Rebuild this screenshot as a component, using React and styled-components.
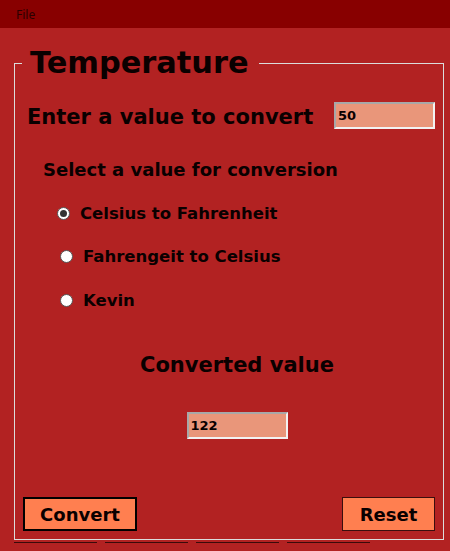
import React, { useState } from 'react'
import styled, { createGlobalStyle } from 'styled-components'

const cp = {
  background: '#b22222',
  menu: '#880000',
  field: '#e9967a',
  button: '#ff7f50',
  frame: '#dcdcdc',
  text: '#0a0000',
}

const GlobalStyle = createGlobalStyle`
  html, body {
    margin: 0;
    padding: 0;
    background-color: ${cp.background};
    font-family: "DejaVu Sans", Verdana, sans-serif;
    color: ${cp.text};
  }
`

/**
 * STYLING
 */
const Window = styled.div`
  width: 450px;
  height: 551px;
  overflow: hidden;
  display: flex;
  flex-direction: column;
`

const MenuBar = styled.div`
  height: 28px;
  background-color: ${cp.menu};
  display: flex;
  align-items: center;
  padding-left: 16px;
`

const MenuItem = styled.span`
  font-family: "Noto Sans", "DejaVu Sans", sans-serif;
  font-size: 12px;
  color: #2a0000;
`

const Group = styled.fieldset`
  margin: 17px 6px 0 14px;
  padding: 0 8px 8px 12px;
  height: 495px;
  box-sizing: border-box;
  border: 1px solid ${cp.frame};
  min-width: 0;
`

const Title = styled.legend`
  font-size: 30.4px;
  font-weight: bold;
  line-height: 36px;
  padding: 0 10px 0 8px;
  margin-left: -5px;
`

const Body = styled.div`
  height: 450px;
  display: flex;
  flex-direction: column;
`

const InputRow = styled.div`
  display: flex;
  align-items: center;
  justify-content: space-between;
  margin-top: 21px;
  height: 27px;
`

const Label = styled.div`
  font-size: ${p => p.size}px;
  font-weight: bold;
  white-space: nowrap;
  padding-top: ${p => p.nudge || 0}px;
`

const Field = styled.input`
  width: 101px;
  height: 27px;
  box-sizing: border-box;
  background-color: ${cp.field};
  border: 2px solid;
  border-color: #a8a8a8 #f2f2f2 #f2f2f2 #a8a8a8;
  font-family: "DejaVu Sans", sans-serif;
  font-weight: bold;
  font-size: 13px;
  padding: 0 2px;
  color: ${cp.text};
  outline: none;
`

const SubHeading = styled(Label)`
  margin: 30px 0 0 16px;
`

const Options = styled.div`
  display: flex;
  flex-direction: column;
  gap: 19.5px;
  margin-top: 21px;
`

const Option = styled.label`
  display: flex;
  align-items: center;
  gap: 10px;
  padding-left: ${p => p.indent}px;
  font-size: 16.5px;
  font-weight: bold;
  height: 24px;
  cursor: pointer;
`

const Dot = styled.span`
  width: 13px;
  height: 13px;
  border-radius: 50%;
  background: #fff;
  border: 1px solid #555;
  box-sizing: border-box;
  display: flex;
  align-items: center;
  justify-content: center;

  &::after {
    content: '';
    width: 7px;
    height: 7px;
    border-radius: 50%;
    background: ${p => (p.checked ? '#333' : 'transparent')};
  }
`

const Result = styled.div`
  display: flex;
  flex-direction: column;
  align-items: center;
  gap: 35px;
  margin-top: 41px;
  padding-left: 12px;
`

const Footer = styled.div`
  margin-top: auto;
  margin-left: -4px;
  display: flex;
  justify-content: space-between;
  align-items: center;
`

const Button = styled.button`
  height: 34px;
  width: ${p => p.w}px;
  background-color: ${cp.button};
  border: ${p => (p.primary ? '2px solid #000' : '1px solid #3a0e0e')};
  font-family: "DejaVu Sans", sans-serif;
  font-weight: bold;
  font-size: 18px;
  color: ${cp.text};
  padding: 0;
`

const Tabs = styled.div`
  display: flex;
  gap: 8px;
  margin: 2px 0 0 14px;
`

const Tab = styled.div`
  width: 83px;
  border-top: 1px solid #3a0a0a;
`

const OPTIONS = [
  { label: 'Celsius to Fahrenheit', indent: 30 },
  { label: 'Fahrengeit to Celsius', indent: 33 },
  { label: 'Kevin', indent: 33 },
]

/**
 * COMPONENT
 */
export default function App() {
  const [choice, setChoice] = useState(0)

  return (
    <Window>
      <GlobalStyle />
      <MenuBar>
        <MenuItem>File</MenuItem>
      </MenuBar>
      <Group>
        <Title>Temperature</Title>
        <Body>
          <InputRow>
            <Label size={21} nudge={2}>Enter a value to convert</Label>
            <Field defaultValue="50" />
          </InputRow>
          <SubHeading size={18}>Select a value for conversion</SubHeading>
          <Options>
            {OPTIONS.map((o, i) => (
              <Option key={o.label} indent={o.indent} onClick={() => setChoice(i)}>
                <Dot checked={choice === i} />
                {o.label}
              </Option>
            ))}
          </Options>
          <Result>
            <Label size={21}>Converted value</Label>
            <Field defaultValue="122" />
          </Result>
          <Footer>
            <Button primary w={114}>Convert</Button>
            <Button w={93}>Reset</Button>
          </Footer>
        </Body>
      </Group>
      <Tabs>
        <Tab />
        <Tab />
        <Tab />
        <Tab />
      </Tabs>
    </Window>
  )
}
